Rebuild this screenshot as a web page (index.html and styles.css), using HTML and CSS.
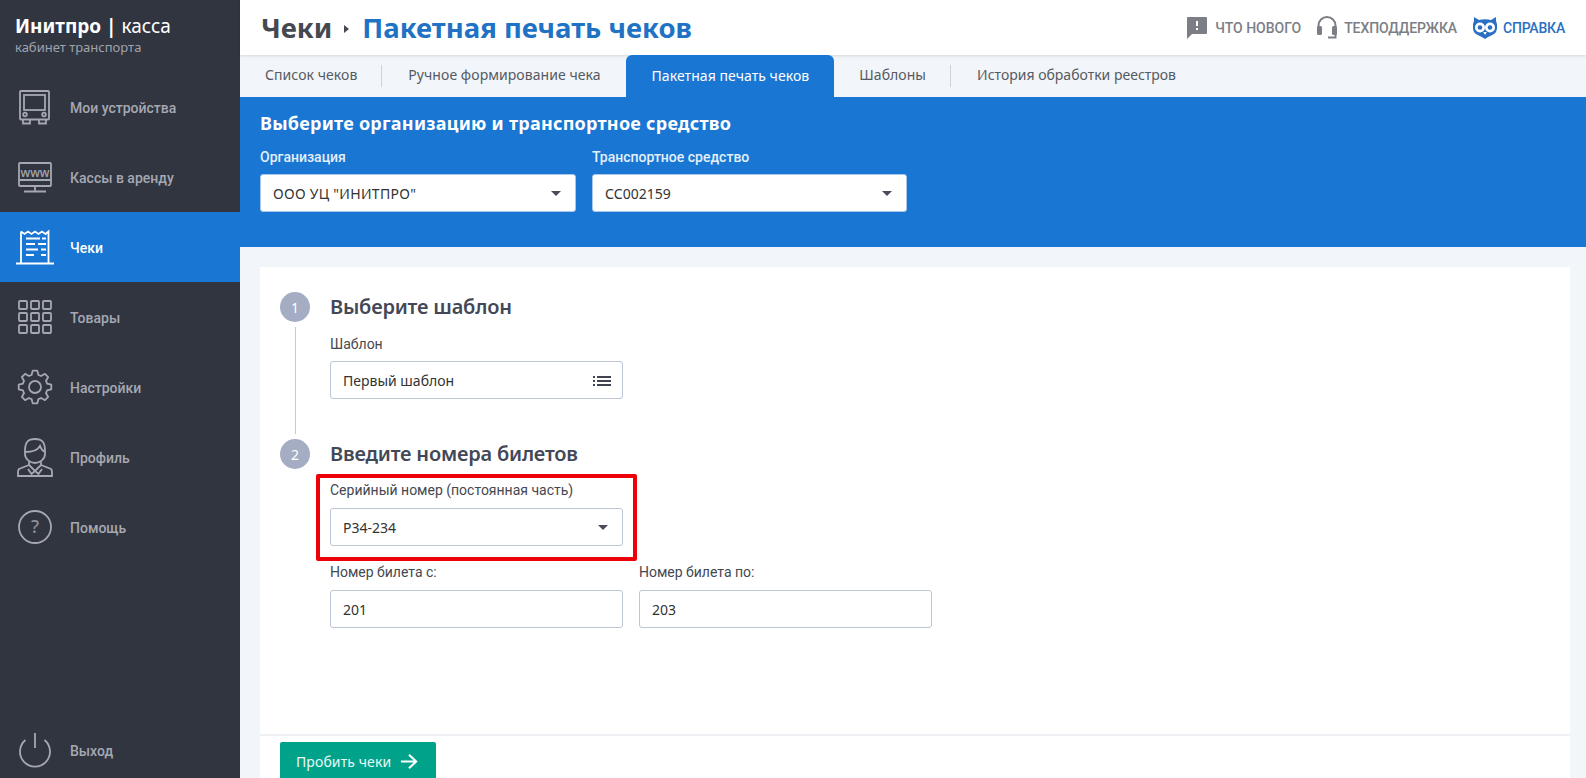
FILE: index.html
```html
<!DOCTYPE html>
<html lang="ru">
<head>
<meta charset="utf-8">
<title>Инитпро | касса</title>
<link rel="stylesheet" href="styles.css">
</head>
<body>
<div class="app">
  <aside class="sidebar">
    <div class="brand">
      <div class="brand-name"><b>Инитпро | </b>касса</div>
      <div class="brand-sub">кабинет транспорта</div>
    </div>
    <nav class="menu">
      <a class="menu-item">
        <svg class="mi" viewBox="0 0 40 40"><rect x="5" y="4" width="29" height="28.500" rx="1"/><rect x="9" y="8" width="21" height="15"/><circle cx="10" cy="27.500" r="1.800"/><circle cx="29" cy="27.500" r="1.800"/><path d="M8 32.500v4h7v-4M24 32.500v4h7v-4"/></svg>
        <span>Мои устройства</span>
      </a>
      <a class="menu-item">
        <svg class="mi" viewBox="0 0 40 40"><rect x="4" y="6" width="32" height="23" rx="1"/><path d="M4 23h32M20 29v5M9 34.500h22"/><text x="20" y="19.500" class="www">www</text></svg>
        <span>Кассы в аренду</span>
      </a>
      <a class="menu-item active">
        <svg class="mi" viewBox="0 0 40 40"><path d="M6 4.500l3.500 2.500 3.500-2.500 3.500 2.500 3.500-2.500 3.500 2.500 3.500-2.500 3.500 2.500 3-2.500V36M6 4.500V36M1 36.500h38M11 11.500h14M27 11.500h4M11 17h9M23 17h8M11 22.500h12M26 22.500h5M11 28h8M26 28h5"/></svg>
        <span>Чеки</span>
      </a>
      <a class="menu-item">
        <svg class="mi" viewBox="0 0 40 40"><rect x="4" y="4" width="8" height="8" rx="1"/><rect x="16" y="4" width="8" height="8" rx="1"/><rect x="28" y="4" width="8" height="8" rx="1"/><rect x="4" y="16" width="8" height="8" rx="1"/><rect x="16" y="16" width="8" height="8" rx="1"/><rect x="28" y="16" width="8" height="8" rx="1"/><rect x="4" y="28" width="8" height="8" rx="1"/><rect x="16" y="28" width="8" height="8" rx="1"/><rect x="28" y="28" width="8" height="8" rx="1"/></svg>
        <span>Товары</span>
      </a>
      <a class="menu-item">
        <svg class="mi" viewBox="0 0 40 40"><circle cx="20" cy="20" r="6"/><path transform="translate(20 20)" stroke-linejoin="round" d="M-3.450-12L-2.300-16.300H2.300L3.450-12A12.500 12.500 0 0 1 6.060-10.930L9.930-13.180L13.180-9.930L10.930-6.060A12.500 12.500 0 0 1 12-3.450L16.300-2.300V2.300L12 3.450A12.500 12.500 0 0 1 10.930 6.060L13.180 9.930L9.930 13.180L6.060 10.930A12.500 12.500 0 0 1 3.450 12L2.300 16.300H-2.300L-3.450 12A12.500 12.500 0 0 1-6.060 10.930L-9.930 13.180L-13.180 9.930L-10.930 6.060A12.500 12.500 0 0 1-12 3.450L-16.300 2.300V-2.300L-12-3.450A12.500 12.500 0 0 1-10.930-6.060L-13.180-9.930L-9.930-13.180L-6.060-10.930A12.500 12.500 0 0 1-3.450-12Z"/></svg>
        <span>Настройки</span>
      </a>
      <a class="menu-item">
        <svg class="mi" viewBox="0 0 40 40"><path d="M10 14C10 5 13 2 20 2S30 5 30 14V17C30 22 25 26 20 26S10 22 10 17Z"/><path d="M10 15C17 15 23 13 25 9C26 12 28 14 30 15"/><path d="M14 24.500V28L4 32Q3 33 3 35V39H37V35Q37 33 36 32L26 28V24.500"/><path d="M14 28L20 34L26 28M20 34L16.500 37L13 32M20 34L23.500 37L27 32"/></svg>
        <span>Профиль</span>
      </a>
      <a class="menu-item">
        <svg class="mi" viewBox="0 0 40 40"><circle cx="20" cy="20" r="16"/><text x="20" y="26" class="q">?</text></svg>
        <span>Помощь</span>
      </a>
    </nav>
    <a class="menu-item logout">
      <svg class="mi" viewBox="0 0 40 40"><path d="M10.500 9A15 15 0 1 0 29.500 9M20 2V17"/></svg>
      <span>Выход</span>
    </a>
  </aside>

  <main class="main">
    <header class="topbar">
      <h1 class="crumbs"><span class="crumb-root">Чеки</span><i class="crumb-sep"></i><span class="crumb-current">Пакетная печать чеков</span></h1>
      <div class="top-links">
        <a class="top-link">
          <svg class="ti ti-new" viewBox="0 0 20 22"><path class="solid" d="M1 0H19A1 1 0 0 1 20 1V16A1 1 0 0 1 19 17H5L0 22V1A1 1 0 0 1 1 0Z"/><path class="cut" d="M9 4h2v5H9zM9 11h2v2H9z"/></svg>
          ЧТО НОВОГО</a>
        <a class="top-link support">
          <svg class="ti ti-head" viewBox="0 0 20 23"><path class="line" d="M1.500 12V9.500a8.500 8.500 0 0 1 17 0V21.500H11"/><rect class="solid" x="0" y="10" width="5" height="9" rx="1.500"/><rect class="solid" x="15" y="10" width="5" height="9" rx="1.500"/></svg>
          ТЕХПОДДЕРЖКА</a>
        <a class="top-link help">
          <svg class="ti ti-owl" viewBox="0 0 24 22"><path class="solid" d="M1 0L6 3C9.500 2 14.500 2 18 3L23 0V4C24.500 7 24.500 12 23 15C21 18 16 19 12 22C8 19 3 18 1 15C-.500 12-.500 7 1 4Z"/><circle class="cut" cx="7" cy="10.500" r="5"/><circle class="cut" cx="17" cy="10.500" r="5"/><circle class="solid" cx="7" cy="10.500" r="2.300"/><circle class="solid" cx="17" cy="10.500" r="2.300"/><path class="cut" d="M10.200 15H13.800L12 18Z"/></svg>
          СПРАВКА</a>
      </div>
    </header>

    <nav class="tabs">
      <a class="tab sep">Список чеков</a>
      <a class="tab">Ручное формирование чека</a>
      <a class="tab active">Пакетная печать чеков</a>
      <a class="tab sep">Шаблоны</a>
      <a class="tab">История обработки реестров</a>
    </nav>

    <section class="band">
      <h2 class="band-title">Выберите организацию и транспортное средство</h2>
      <div class="band-fields">
        <div class="field">
          <label class="band-label">Организация</label>
          <div class="control band-control wide">ООО УЦ "ИНИТПРО"<i class="caret"></i></div>
        </div>
        <div class="field">
          <label class="band-label">Транспортное средство</label>
          <div class="control band-control narrow">СС002159<i class="caret"></i></div>
        </div>
      </div>
    </section>

    <section class="content">
      <div class="card">
        <div class="card-body">
          <div class="step first">
            <div class="step-rail"><div class="step-num">1</div><div class="step-line"></div></div>
            <div class="step-main">
              <h3 class="step-title">Выберите шаблон</h3>
              <label class="label">Шаблон</label>
              <div class="control">Первый шаблон
                <svg class="list-ico" viewBox="0 0 18 12"><path d="M0 1h2v2H0zM4 1h14v2H4zM0 5h2v2H0zM4 5h14v2H4zM0 9h2v2H0zM4 9h14v2H4z"/></svg>
              </div>
            </div>
          </div>
          <div class="step">
            <div class="step-rail"><div class="step-num">2</div></div>
            <div class="step-main">
              <h3 class="step-title second">Введите номера билетов</h3>
              <div class="highlight-wrap">
                <label class="label">Серийный номер (постоянная часть)</label>
                <div class="control">Р34-234<i class="caret"></i></div>
                <div class="highlight"></div>
              </div>
              <div class="pair">
                <div class="field">
                  <label class="label">Номер билета с:</label>
                  <div class="control">201</div>
                </div>
                <div class="field">
                  <label class="label">Номер билета по:</label>
                  <div class="control">203</div>
                </div>
              </div>
            </div>
          </div>
        </div>
        <div class="card-foot">
          <button class="primary">Пробить чеки
            <svg viewBox="0 0 20 18"><path d="M1 9h17M10 1.500L18 9l-8 7.500"/></svg>
          </button>
        </div>
      </div>
    </section>
  </main>
</div>
</body>
</html>
```

FILE: styles.css
```css
* { box-sizing: border-box; }
html, body { margin: 0; height: 100%; overflow: hidden; }
body { font-family: "Noto Sans", sans-serif; color: #333; background: #f2f5f9; }
a { color: inherit; text-decoration: none; }
h1, h2, h3 { margin: 0; }

.app { display: flex; height: 778px; }

/* Sidebar */
.sidebar { width: 240px; flex: none; background: #313540; display: flex; flex-direction: column; }
.brand { height: 72px; padding: 13px 0 0 15px; }
.brand-name { font-size: 19px; line-height: 26px; color: #fff; }
.brand-name b { font-weight: 700; }
.brand-sub { font-size: 13px; line-height: 18px; margin-top: -1px; color: #a0a3ad; }
.menu { display: flex; flex-direction: column; }
.menu-item { height: 70px; display: flex; align-items: center; padding-left: 15px; font-family: Roboto, sans-serif; font-weight: 500; font-size: 14px; color: #a5a8b2; }
.menu-item span { margin-left: 15px; padding-top: 2px; }
.menu-item.active { background: #1976d2; color: #fff; }
.mi { width: 40px; height: 40px; flex: none; fill: none; stroke: #a5a8b2; stroke-width: 1.800; }
.active .mi { stroke: #fff; }
.www { font-family: "Noto Sans", sans-serif; font-size: 12px; fill: #a5a8b2; stroke: none; text-anchor: middle; }
.q { font-family: "Noto Sans", sans-serif; font-size: 18px; fill: #8d909a; stroke: none; text-anchor: middle; }
.logout { margin-top: auto; height: 54px; }
.logout span { padding-top: 0; }

/* Top bar */
.main { flex: 1; min-width: 0; display: flex; flex-direction: column; }
.topbar { height: 55px; flex: none; background: #fff; box-shadow: 0 1px 3px rgba(0,0,0,.12); display: flex; align-items: center; justify-content: space-between; padding: 0 21px 0 21px; position: relative; }
.crumbs { display: flex; align-items: center; font-size: 27.500px; line-height: 36px; font-weight: 700; }
.crumb-root { color: #444850; }
.crumb-sep { width: 0; height: 0; margin: 3px 13px 0 12px; border-left: 5px solid #444850; border-top: 4px solid transparent; border-bottom: 4px solid transparent; }
.crumb-current { color: #1f72c4; }
.top-links { display: flex; align-items: center; gap: 16px; }
.top-link { display: flex; align-items: center; gap: 8px; font-family: Roboto, sans-serif; font-weight: 500; font-size: 14px; color: #7b7e85; }
.top-link.support { gap: 7px; letter-spacing: -.1px; }
.top-link.help { color: #2a70c2; gap: 6px; letter-spacing: -.2px; }
.ti { flex: none; }
.ti-new { width: 20px; height: 22px; }
.ti-head { width: 20px; height: 23px; }
.ti-owl { width: 24px; height: 22px; }
.ti .solid { fill: #7b7e85; }
.ti .cut { fill: #fff; }
.ti .line { fill: none; stroke: #7b7e85; stroke-width: 2; }
.help .ti .solid { fill: #2a70c2; }

/* Tabs */
.tabs { height: 42px; flex: none; display: flex; align-items: center; font-size: 14px; letter-spacing: .06px; color: #555a63; }
.tab { height: 42px; display: flex; align-items: center; padding: 0 25px 4px 26px; position: relative; }
.tab:first-child { padding-left: 25px; }
.tab:last-child { letter-spacing: 0; }
.tab.sep::after { content: ""; position: absolute; right: 0; top: 10px; height: 22px; width: 1px; background: #cfd3d9; }
.tab.active { background: #1976d2; color: #fff; border-radius: 6px 6px 0 0; padding: 0 25px 2px 26px; }
.tab.active + .tab { padding-left: 25px; }

/* Blue band */
.band { height: 150px; flex: none; background: #1976d2; padding: 14px 20px 0; color: #fff; }
.band-title { font-size: 18px; line-height: 24px; font-weight: 700; letter-spacing: .25px; }
.band-fields { display: flex; gap: 16px; margin-top: 13px; }
.band-label { display: block; font-family: Roboto, sans-serif; font-weight: 500; font-size: 14px; line-height: 18px; color: #e3effa; margin-bottom: 8px; }

/* Controls */
.control { position: relative; width: 293px; height: 38px; display: flex; align-items: center; padding-left: 12px; background: #fff; border: 1px solid #bcc6d4; border-radius: 3px; font-size: 14px; color: #333; }
.band-control { width: 316px; border-color: #a7c6ea; }
.band-control.wide { letter-spacing: .3px; }
.band-control.narrow { width: 315px; }
.caret { position: absolute; right: 14px; top: 16px; width: 0; height: 0; border-left: 5px solid transparent; border-right: 5px solid transparent; border-top: 5px solid #4a4d57; }
.list-ico { position: absolute; right: 11px; top: 13px; width: 18px; height: 12px; fill: #3f4450; }
.label { display: block; font-family: Roboto, sans-serif; font-size: 14px; line-height: 18px; color: #444850; margin-bottom: 8px; }

/* Card */
.content { flex: 1; min-height: 0; padding: 20px 16px 0 20px; }
.card { height: 511px; background: #fff; display: flex; flex-direction: column; }
.card-body { height: 467px; flex: none; padding: 25px 20px 0; }
.step { display: flex; }
.step.first { height: 147px; }
.step-rail { width: 30px; flex: none; display: flex; flex-direction: column; align-items: center; margin-right: 20px; }
.step-num { width: 30px; height: 30px; flex: none; border-radius: 50%; background: #a4adc4; color: #fff; font-size: 14px; display: flex; align-items: center; justify-content: center; }
.step-line { width: 1px; height: 107px; margin-top: 5px; background: #c5cad4; }
.step-main { flex: 1; }
.step-title { font-size: 20px; line-height: 30px; font-weight: 600; letter-spacing: -.2px; color: #434856; margin-bottom: 13px; }
.step-title.second { margin-bottom: 12px; }
.highlight-wrap { position: relative; width: 293px; margin-bottom: 17px; }
.highlight-wrap .label { margin-bottom: 9px; }
.pair .label { margin-bottom: 9px; }
.highlight { position: absolute; left: -14px; right: -14px; top: -7px; bottom: -15px; border: 4px solid #ed0008; border-radius: 2px; }
.pair { display: flex; gap: 16px; }

/* Footer */
.card-foot { height: 44px; flex: none; border-top: 2px solid #eef0f3; padding: 6px 20px 0; }
.primary { height: 38px; width: 156px; display: flex; align-items: center; gap: 9px; padding: 0 0 0 16px; background: #00a28a; color: #e8fbf7; border: 0; border-radius: 2px; font-family: "Noto Sans", sans-serif; font-size: 14px; letter-spacing: .1px; }
.primary svg { width: 18px; height: 17px; fill: none; stroke: #fff; stroke-width: 2.300; }
```
